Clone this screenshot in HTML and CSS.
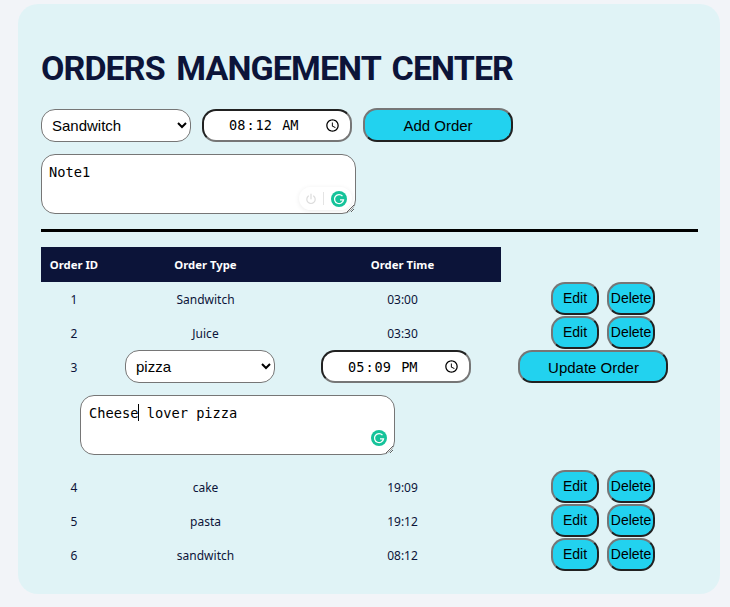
FILE: index.html
```html
<!DOCTYPE html>
<html lang="en">
<head>
<meta charset="utf-8">
<title>Orders Mangement Center</title>
<link rel="stylesheet" href="styles.css">
</head>
<body>
<main class="panel">
  <h1 class="title">ORDERS MANGEMENT CENTER</h1>
  <form class="order-form">
    <div class="form-row">
      <select class="field-select"><option>Sandwitch</option></select>
      <input class="field-time" type="time" value="08:12">
      <button class="btn btn-wide" type="button">Add Order</button>
    </div>
    <div class="note-wrap">
      <textarea class="note">Note1</textarea>
      <div class="gr-pill">
        <svg class="gr-power" viewBox="0 0 12 12" width="12" height="12"><path d="M3.4 3a4.2 4.2 0 1 0 5.2 0M6 1.2v4.6" fill="none" stroke="#dcdcdc" stroke-width="1.2" stroke-linecap="round"/></svg>
        <span class="gr-sep"></span>
        <svg class="gr-logo" viewBox="0 0 16 16" width="16" height="16"><circle cx="8" cy="8" r="8" fill="#15c39a"/><path d="M11.5 5.2A4.5 4.5 0 1 0 12.5 8.8H9" fill="none" stroke="#fff" stroke-width="1.3"/></svg>
      </div>
    </div>
  </form>
  <hr class="rule">
  <table class="orders">
    <colgroup><col class="c-id"><col class="c-type"><col class="c-time"><col class="c-act"></colgroup>
    <thead>
      <tr><th>Order ID</th><th>Order Type</th><th>Order Time</th><th class="th-empty"></th></tr>
    </thead>
    <tbody>
      <tr><td>1</td><td>Sandwitch</td><td>03:00</td><td class="ctl act"><button class="btn btn-sm" type="button">Edit</button><button class="btn btn-sm" type="button">Delete</button></td></tr>
      <tr><td>2</td><td>Juice</td><td>03:30</td><td class="ctl act"><button class="btn btn-sm" type="button">Edit</button><button class="btn btn-sm" type="button">Delete</button></td></tr>
      <tr>
        <td>3</td>
        <td class="ctl"><select class="field-select shift"><option>pizza</option></select></td>
        <td class="ctl"><input class="field-time shift-time" type="time" value="17:09"></td>
        <td class="ctl act"><button class="btn btn-update shift-btn" type="button">Update Order</button></td>
      </tr>
      <tr class="note-row">
        <td colspan="4">
          <div class="note-wrap note-inset">
            <textarea class="note">Cheese lover pizza</textarea>
            <span class="caret"></span>
            <svg class="gr-logo gr-solo" viewBox="0 0 16 16" width="16" height="16"><circle cx="8" cy="8" r="8" fill="#15c39a"/><path d="M11.5 5.2A4.5 4.5 0 1 0 12.5 8.8H9" fill="none" stroke="#fff" stroke-width="1.3"/></svg>
          </div>
        </td>
      </tr>
      <tr><td>4</td><td>cake</td><td>19:09</td><td class="ctl act"><button class="btn btn-sm" type="button">Edit</button><button class="btn btn-sm" type="button">Delete</button></td></tr>
      <tr><td>5</td><td>pasta</td><td>19:12</td><td class="ctl act"><button class="btn btn-sm" type="button">Edit</button><button class="btn btn-sm" type="button">Delete</button></td></tr>
      <tr><td>6</td><td>sandwitch</td><td>08:12</td><td class="ctl act"><button class="btn btn-sm" type="button">Edit</button><button class="btn btn-sm" type="button">Delete</button></td></tr>
    </tbody>
  </table>
</main>
</body>
</html>
```
FILE: styles.css
```css
* { box-sizing: border-box; }
html, body { margin: 0; height: 607px; overflow: hidden; }
body {
  background: #f2f4f8;
  padding: 4px 10px 13px 18px;
  font-family: "Noto Sans", sans-serif;
  color: #0c1439;
}
.panel {
  height: 590px;
  background: #e0f3f6;
  border-radius: 20px;
  padding: 46px 22px 0 23px;
}
.title {
  margin: 0;
  height: 36px;
  padding-top: 0;
  font-family: "Roboto", sans-serif;
  font-weight: 700;
  font-size: 34px;
  line-height: 36px;
  letter-spacing: -0.9px;
  word-spacing: 4px;
  color: #0c1439;
  white-space: nowrap;
}
.order-form { margin-top: 22px; }
.form-row { display: flex; align-items: center; height: 34px; gap: 11px; }
.field-select {
  width: 150px;
  height: 33px;
  border: 1px solid #767676;
  border-radius: 14px;
  background: #fff;
  padding: 0 6px;
  font-family: "Liberation Sans", sans-serif;
  font-size: 15px;
  line-height: normal;
  color: #000;
}
.field-time {
  width: 150px;
  height: 33px;
  border: 2px inset #767676;
  border-radius: 14px;
  background: #fff;
  padding: 1px 10px 1px 24px;
  font-family: "DejaVu Sans Mono", monospace;
  font-size: 13.6px;
  line-height: normal;
  color: #000;
}
.field-time::-webkit-calendar-picker-indicator {
  width: 15px;
  height: 15px;
  padding: 0;
  margin: 0;
}
.btn {
  background: #22d2ef;
  border: 2px outset #767676;
  border-radius: 14px;
  color: #000;
  font-family: "Liberation Sans", sans-serif;
  font-size: 15px;
  line-height: normal;
  padding: 0;
  cursor: pointer;
}
.btn-wide { width: 150px; height: 34px; }
.btn-update { width: 150px; height: 33px; padding: 1px 0 0 2px; }
.btn-sm { width: 48px; height: 33px; font-size: 14px; margin: 0 4px; padding: 0 0 2px 1px; }
.note-wrap { position: relative; width: 315px; height: 60px; margin-top: 12px; }
.note {
  display: block;
  width: 315px;
  height: 60px;
  border: 1px solid #767676;
  border-radius: 14px;
  background: #fff;
  padding: 9px 7px;
  font-family: "DejaVu Sans Mono", monospace;
  font-size: 13.7px;
  color: #000;
}
.note-inset .note { padding-left: 8px; }
.gr-pill {
  position: absolute;
  right: 4px;
  bottom: 4px;
  width: 53px;
  height: 23px;
  border-radius: 12px;
  background: #fff;
  box-shadow: 0 1px 5px rgba(0, 0, 0, 0.08);
  display: flex;
  align-items: center;
  padding-left: 6px;
}
.gr-sep { width: 1px; height: 13px; background: #e4e4e4; margin: 0 7px 0 6px; }
.gr-logo { display: block; }
.gr-solo { position: absolute; right: 8px; bottom: 9px; }
.caret { position: absolute; left: 58px; top: 9px; width: 1px; height: 17px; background: #000; }
.rule { margin: 15px 0 15px; height: 3px; border: 0; background: #000; }
.orders { width: 657px; border-collapse: collapse; table-layout: fixed; font-size: 12px; }
.c-id { width: 66px; }
.c-type { width: 197px; }
.c-time { width: 197px; }
.orders th {
  height: 35px;
  padding: 0;
  background: #0c1439;
  color: #fff;
  font-weight: 700;
  font-size: 11.3px;
  text-align: center;
}
.orders th.th-empty { background: transparent; }
.orders td { height: 34px; padding: 0; text-align: center; color: #0c1439; }
.orders td.ctl { vertical-align: top; line-height: 0; }
.orders td.act { padding-left: 6px; }
.shift { margin-right: 11px; vertical-align: top; }
.shift-time { margin-right: 13px; vertical-align: top; }
.btn-sm, .shift-btn { vertical-align: top; }
.shift-btn { margin-right: 20px; }
.orders .note-row td { height: 86px; text-align: left; padding: 11px 0 15px 39px; }
.note-inset { margin: 0; }
```
